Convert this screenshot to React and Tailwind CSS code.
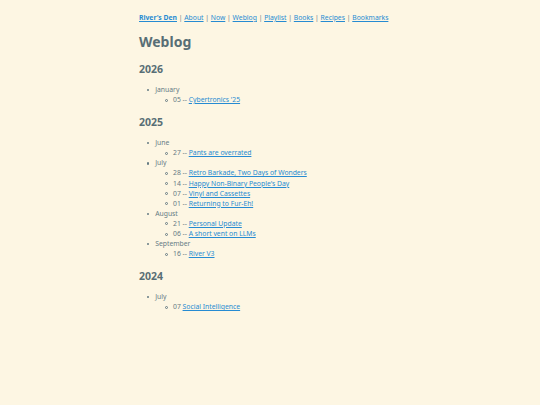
export default function App() {
  const link = "text-[#268bd2] underline";
  const data = [
    {
      year: "2026",
      months: [{ m: "January", items: [["05", "Cybertronics '25"]] }],
    },
    {
      year: "2025",
      months: [
        { m: "June", items: [["27", "Pants are overrated"]] },
        {
          m: "July",
          items: [
            ["28", "Retro Barkade, Two Days of Wonders"],
            ["14", "Happy Non-Binary People's Day"],
            ["07", "Vinyl and Cassettes"],
            ["01", "Returning to Fur-Eh!"],
          ],
        },
        {
          m: "August",
          items: [
            ["21", "Personal Update"],
            ["06", "A short vent on LLMs"],
          ],
        },
        { m: "September", items: [["16", "River V3"]] },
      ],
    },
    {
      year: "2024",
      months: [{ m: "July", items: [["07", "Social Intelligence", true]] }],
    },
  ];
  const navItems = ["About", "Now", "Weblog", "Playlist", "Books", "Recipes", "Bookmarks"];
  return (
    <div className="min-h-[405px] w-full bg-[#fdf6e3] text-[#657b83] [font-family:'Noto_Sans',sans-serif]">
      <div className="mx-auto w-[262px] pt-[13px] pb-4">
        <div className="text-[6.8px] leading-[10px]">
          <a className={`${link} font-bold`}>River's Den</a>
          {navItems.map((n) => (
            <span key={n}>
              {" | "}
              <a className={link}>{n}</a>
            </span>
          ))}
        </div>
        <h1 className="mt-[9px] text-[14px] leading-[20px] font-bold text-[#586e75]">Weblog</h1>
        {data.map((y) => (
          <div key={y.year}>
            <h2 className="mt-[10px] text-[10.5px] leading-[15px] font-bold text-[#586e75]">{y.year}</h2>
            <ul className="mt-[8px] pl-[16px] text-[6.8px] leading-[10.1px]">
              {y.months.map((mo) => (
                <li key={mo.m}>
                  <div className="flex items-center">
                    <span className="-ml-[8.5px] mr-[6.5px] h-[2.2px] w-[2.2px] shrink-0 rounded-full bg-[#657b83]" />
                    <span>{mo.m}</span>
                  </div>
                  <ul className="pl-[18px]">
                    {mo.items.map(([d, t, noDash]) => (
                      <li key={t} className="flex items-center">
                        <span className="-ml-[8.5px] mr-[5.5px] h-[3px] w-[3px] shrink-0 rounded-full border-[0.6px] border-[#657b83]" />
                        <span>
                          {d}
                          {noDash ? " " : " -- "}
                          <a className={link}>{t}</a>
                        </span>
                      </li>
                    ))}
                  </ul>
                </li>
              ))}
            </ul>
          </div>
        ))}
      </div>
    </div>
  );
}
